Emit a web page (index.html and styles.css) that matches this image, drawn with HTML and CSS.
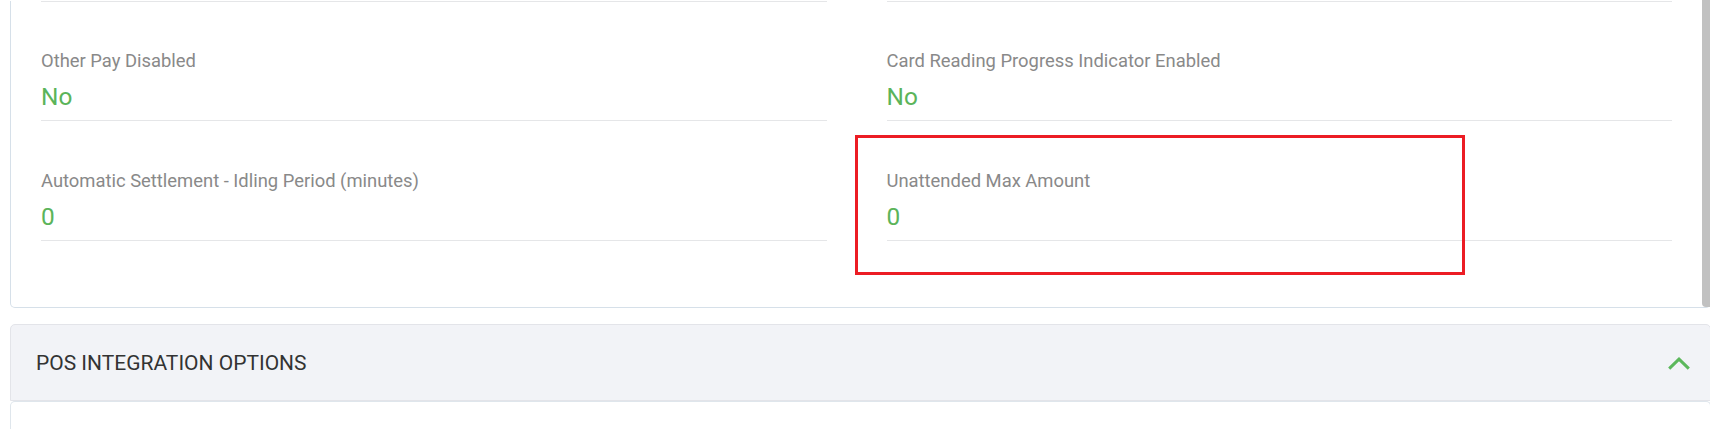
FILE: index.html
```html
<!DOCTYPE html>
<html lang="en">
<head>
<meta charset="utf-8">
<title>Terminal settings</title>
<link rel="stylesheet" href="styles.css">
</head>
<body>
<div class="page">
  <section class="card">
    <div class="fields">
      <div class="field">
        <div class="field-label">Other Pay Disabled</div>
        <div class="field-value">No</div>
      </div>
      <div class="field">
        <div class="field-label">Card Reading Progress Indicator Enabled</div>
        <div class="field-value">No</div>
      </div>
      <div class="field">
        <div class="field-label">Automatic Settlement - Idling Period (minutes)</div>
        <div class="field-value">0</div>
      </div>
      <div class="field field-highlighted">
        <div class="field-label">Unattended Max Amount</div>
        <div class="field-value">0</div>
        <div class="highlight-box"></div>
      </div>
    </div>
  </section>

  <section class="panel">
    <div class="panel-header">
      <span class="panel-title">POS INTEGRATION OPTIONS</span>
      <svg class="chevron" width="22" height="13" viewBox="0 0 22 13" aria-hidden="true">
        <polyline points="1.2,11.6 11,2.1 20.8,11.6" fill="none" stroke="#5cb85c" stroke-width="3"/>
      </svg>
    </div>
    <div class="panel-body"></div>
  </section>

  <div class="scroll-thumb"></div>
</div>
</body>
</html>
```

FILE: styles.css
```css
html, body {
  margin: 0;
  padding: 0;
  background: #ffffff;
}

body {
  font-family: Roboto, "Liberation Sans", Arial, sans-serif;
  overflow: hidden;
}

.page {
  position: relative;
  padding: 1px 0 0 10px;
  width: 1710px;
  box-sizing: border-box;
  overflow: hidden;
}

.card {
  margin-right: -1px;
  border: 1px solid #d6e0e9;
  border-top: none;
  border-radius: 0 0 5px 5px;
  padding: 0 38px 66px 30px;
  background: #ffffff;
}

.fields {
  display: grid;
  grid-template-columns: 1fr 1fr;
  column-gap: 60px;
}

.field {
  position: relative;
  padding: 46px 0 5px;
  border-bottom: 1px solid #e5e6e8;
}

.field:nth-child(-n+2) {
  border-top: 1px solid #e5e6e8;
  padding-top: 45px;
}

.field-label {
  font-size: 18.4px;
  line-height: 27px;
  color: #898989;
}

.field-value {
  margin-top: 5px;
  font-size: 24.4px;
  line-height: 36px;
  color: #5bb45a;
}

.highlight-box {
  position: absolute;
  left: -32px;
  top: 14px;
  width: 610px;
  height: 140px;
  box-sizing: border-box;
  border: 3px solid #ec1c24;
  pointer-events: none;
}

.panel {
  margin-top: 16px;
  margin-right: -1px;
}

.panel-header {
  display: flex;
  align-items: center;
  justify-content: space-between;
  padding: 26px 20px 24px 25px;
  background: #f2f3f7;
  border: 1px solid #e3e4e9;
  border-radius: 5px 5px 0 0;
}

.panel-title {
  font-size: 21px;
  line-height: 25px;
  color: #333333;
}

.chevron {
  display: block;
}

.panel-body {
  height: 60px;
  border: 1px solid #dfe6ec;
  border-bottom: none;
  border-radius: 5px 5px 0 0;
  background: #ffffff;
}

.scroll-thumb {
  position: absolute;
  top: 0;
  right: 0;
  width: 8px;
  height: 307px;
  background: #c1c1c1;
  border-radius: 0 0 0 4px;
}
```
